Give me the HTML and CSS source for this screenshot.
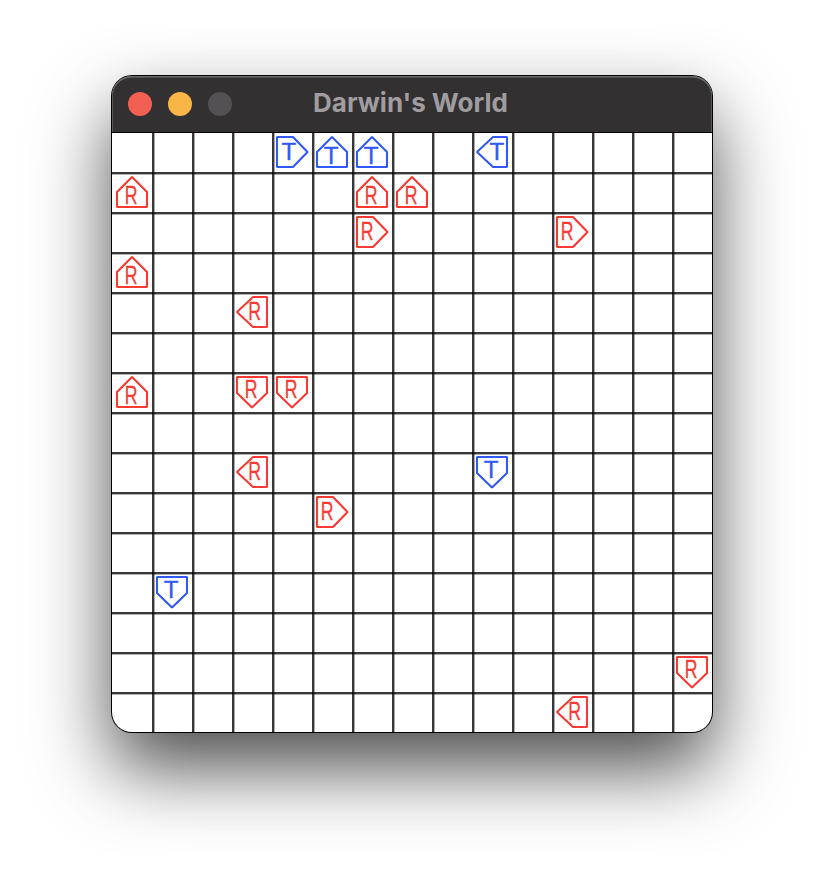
FILE: index.html
```html
<!DOCTYPE html>
<html lang="en">
<head>
<meta charset="utf-8">
<title>Darwin's World</title>
<link rel="stylesheet" href="styles.css">
</head>
<body>
<main class="window">
  <header class="titlebar">
    <div class="controls"><i class="dot close"></i><i class="dot minimize"></i><i class="dot zoom"></i></div>
    <h1 class="title">Darwin's World</h1>
  </header>
  <section class="board" id="board"></section>
</main>
<script src="board.js"></script>
</body>
</html>
```
FILE: styles.css
```css
* { box-sizing: border-box; }
body {
  margin: 0;
  width: 824px;
  height: 880px;
  padding: 76px 112px 0;
  background: #fff;
  overflow: hidden;
}
.window {
  width: 600px;
  height: 656px;
  border-radius: 20px;
  background: #fff;
  box-shadow: 0 0 0 1px #000, 0 36px 76px rgba(0, 0, 0, .7);
}
.titlebar {
  display: grid;
  grid-template-columns: 105px 1fr 108px;
  align-items: center;
  height: 57px;
  padding: 0 16px;
  border-bottom: 1px solid #000;
  border-radius: 20px 20px 0 0;
  background: #333032;
  box-shadow: inset 0 2px 0 -0.5px #6b6b6b, inset 1px 0 0 #5a5859, inset -1px 0 0 #5a5859;
}
.controls { display: flex; gap: 16px; }
.dot { flex: none; width: 24px; height: 24px; border-radius: 50%; }
.close { background: #f25f53; }
.minimize { background: #f9b545; }
.zoom { background: #545154; }
.title {
  margin: 0 0 3px;
  color: #a09da0;
  font: 700 26px/30px Inter, sans-serif;
  text-align: center;
  white-space: nowrap;
}
.board {
  display: grid;
  grid-template: 39px repeat(14, 40px) / repeat(15, 40px);
  height: 599px;
  border-radius: 0 0 20px 20px;
  overflow: hidden;
}
.board::before,
.board::after { content: ""; }
.board::before {
  grid-area: 1 / 2 / -1 / -1;
  background: linear-gradient(90deg, rgba(0, 0, 0, .78) 2px, rgba(0, 0, 0, .32) 2px 3px, transparent 3px) 0 0 / 40px 40px;
}
.board::after {
  grid-area: 2 / 1 / -1 / -1;
  background: linear-gradient(rgba(0, 0, 0, .78) 2px, rgba(0, 0, 0, .32) 2px 3px, transparent 3px) 0 0 / 40px 40px;
}
.piece { align-self: end; width: 40px; height: 40px; overflow: visible; }
.shape { fill: none; stroke: currentColor; stroke-width: 2.1; stroke-linejoin: bevel; }
.letter { fill: currentColor; stroke: currentColor; stroke-width: .3; font-family: "Liberation Sans", sans-serif; }
.R { color: #f83a33; }
.T { color: #3059f5; }
```
FILE: board.js
```javascript
// Each entry: species, facing, column, row.
const pieces = [
  ['T', 'right', 4, 0], ['T', 'up', 5, 0], ['T', 'up', 6, 0], ['T', 'left', 9, 0],
  ['R', 'up', 0, 1], ['R', 'up', 6, 1], ['R', 'up', 7, 1],
  ['R', 'right', 6, 2], ['R', 'right', 11, 2], ['R', 'up', 0, 3], ['R', 'left', 3, 4],
  ['R', 'up', 0, 6], ['R', 'down', 3, 6], ['R', 'down', 4, 6],
  ['R', 'left', 3, 8], ['T', 'down', 9, 8], ['R', 'right', 5, 9],
  ['T', 'down', 1, 11], ['R', 'down', 14, 13], ['R', 'left', 11, 14]
];
const shapes = {
  right: 'M5 5H21L35.5 20L21 35H5Z',
  up: 'M5 35V20L20 5L35 20V35Z',
  left: 'M35 5H21L5 20L21 35H35Z',
  down: 'M5 5V21L20 35.5L35 21V5Z'
};
// Letter left edge and baseline for each species and facing.
const letters = {
  R: { size: 25.5, width: 12.8, right: [8.7, 27.8], up: [12.7, 31.8], left: [16.3, 27.8], down: [12.7, 25.8] },
  T: { size: 23.2, width: 14.8, right: [9.6, 28], up: [11.8, 32], left: [17.6, 28], down: [11.8, 26] }
};
document.getElementById('board').innerHTML = pieces.map(([kind, facing, col, row]) => {
  const l = letters[kind];
  const [x, y] = l[facing];
  return `<svg class="piece ${kind}" viewBox="0 0 40 40" style="grid-column:${col + 1};grid-row:${row + 1}">
    <path class="shape" d="${shapes[facing]}"/>
    <text class="letter" x="${x}" y="${y}" font-size="${l.size}" textLength="${l.width}" lengthAdjust="spacingAndGlyphs">${kind}</text>
  </svg>`;
}).join('');
```
